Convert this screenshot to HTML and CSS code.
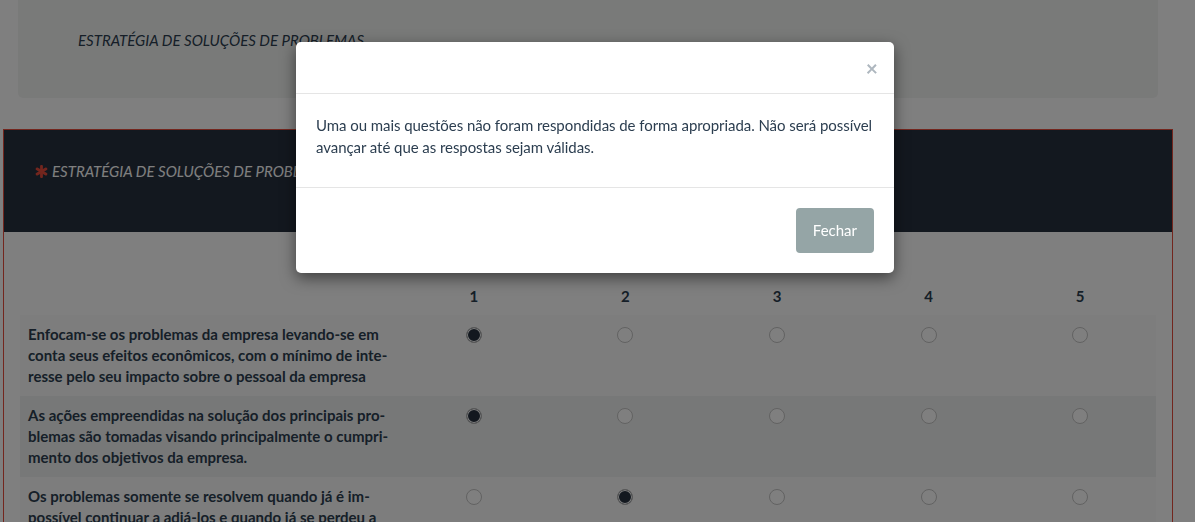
FILE: index.html
```html
<!DOCTYPE html>
<html lang="pt-BR">
<head>
    <meta charset="UTF-8">
    <meta name="viewport" content="width=device-width, initial-scale=1.0">
    <title>Questionário</title>
    <link rel="stylesheet" href="styles.css">
</head>
<body>
    <div class="page">
        <div class="well">
            <p class="well-title">ESTRATÉGIA DE SOLUÇÕES DE PROBLEMAS</p>
        </div>

        <div class="question-card">
            <div class="question-head">
                <svg class="required" width="13" height="13" viewBox="0 0 14 14">
                    <g fill="currentColor">
                        <rect x="5.5" y="0" width="3" height="14" rx="1.2"/>
                        <rect x="5.5" y="0" width="3" height="14" rx="1.2" transform="rotate(60 7 7)"/>
                        <rect x="5.5" y="0" width="3" height="14" rx="1.2" transform="rotate(-60 7 7)"/>
                    </g>
                </svg>
                <span class="question-title">ESTRATÉGIA DE SOLUÇÕES DE PROBLEMAS</span>
            </div>

            <div class="question-body">
                <table class="scale">
                    <colgroup>
                        <col class="col-text">
                        <col><col><col><col><col>
                    </colgroup>
                    <thead>
                        <tr>
                            <th></th>
                            <th>1</th><th>2</th><th>3</th><th>4</th><th>5</th>
                        </tr>
                    </thead>
                    <tbody>
                        <tr>
                            <td class="item">Enfocam-se os problemas da empresa levando-se em conta seus efeitos econômicos, com o mínimo de inte&shy;resse pelo seu impacto sobre o pessoal da empresa</td>
                            <td><input type="radio" name="q1" checked></td>
                            <td><input type="radio" name="q1"></td>
                            <td><input type="radio" name="q1"></td>
                            <td><input type="radio" name="q1"></td>
                            <td><input type="radio" name="q1"></td>
                        </tr>
                        <tr>
                            <td class="item">As ações empreendidas na solução dos principais pro&shy;blemas são tomadas visando principalmente o cumpri&shy;mento dos objetivos da empresa.</td>
                            <td><input type="radio" name="q2" checked></td>
                            <td><input type="radio" name="q2"></td>
                            <td><input type="radio" name="q2"></td>
                            <td><input type="radio" name="q2"></td>
                            <td><input type="radio" name="q2"></td>
                        </tr>
                        <tr>
                            <td class="item">Os problemas somente se resolvem quando já é im&shy;possível continuar a adiá-los e quando já se perdeu a oportunidade de resolvê-los com calma.</td>
                            <td><input type="radio" name="q3"></td>
                            <td><input type="radio" name="q3" checked></td>
                            <td><input type="radio" name="q3"></td>
                            <td><input type="radio" name="q3"></td>
                            <td><input type="radio" name="q3"></td>
                        </tr>
                    </tbody>
                </table>
            </div>
        </div>
    </div>

    <div class="backdrop"></div>

    <div class="modal">
        <div class="modal-dialog">
            <div class="modal-header">
                <button type="button" class="close">&times;</button>
            </div>
            <div class="modal-body">
                <p>Uma ou mais questões não foram respondidas de forma apropriada. Não será possível avançar até que as respostas sejam válidas.</p>
            </div>
            <div class="modal-footer">
                <button type="button" class="btn">Fechar</button>
            </div>
        </div>
    </div>
</body>
</html>
```

FILE: styles.css
```css
html{
    font-family: Lato, "Open Sans", sans-serif;
    font-size: 15px;
}

body{
    margin: 0;
    background-color: #ffffff;
    color: #2c3e50;
    line-height: 21px;
    overflow: hidden;
}

.page{
    width: 1170px;
    margin-left: 3px;
}

.well{
    margin: 0 15px;
    height: 98px;
    padding: 30px 60px 0;
    box-sizing: border-box;
    background-color: #f3f4f3;
    border-radius: 0 0 5px 5px;
}

.well-title{
    margin: 0;
    font-style: italic;
}

.question-card{
    margin-top: 31px;
    border: 1px solid #e74c3c;
}

.question-head{
    display: flex;
    align-items: center;
    gap: 4px;
    height: 102px;
    box-sizing: border-box;
    padding: 31px 30px 50px 31px;
    background-color: #26303e;
    color: #ffffff;
}

.required{
    color: #e74c3c;
    flex-shrink: 0;
}

.question-title{
    font-style: italic;
}

.question-body{
    padding: 46px 16px 0 16px;
}

.scale{
    width: 100%;
    table-layout: fixed;
    border-collapse: collapse;
}

.col-text{
    width: 378px;
}

.scale th{
    padding: 8px;
    text-align: center;
    font-weight: bold;
}

.scale td{
    padding: 9px 8px;
    text-align: center;
    vertical-align: top;
}

.scale td.item{
    padding-right: 6px;
    text-align: left;
    font-weight: bold;
    hyphens: manual;
}

.scale tbody tr:nth-child(odd){
    background-color: #fafafa;
}

.scale tbody tr:nth-child(even){
    background-color: #eff1f0;
}

.scale input[type="radio"]{
    appearance: none;
    width: 16px;
    height: 16px;
    margin: 3px 0 0;
    border: 1px solid #c4c4c4;
    border-radius: 50%;
    background-color: #ffffff;
    vertical-align: top;
}

.scale input[type="radio"]:checked{
    background-color: #26303e;
    box-shadow: inset 0 0 0 1px #ffffff;
    border-color: #b4b4b4;
}

.backdrop{
    position: fixed;
    inset: 0;
    background-color: rgba(0, 0, 0, 0.5);
}

.modal{
    position: fixed;
    inset: 0;
    display: flex;
    justify-content: center;
    align-items: flex-start;
    padding: 42px 5px 0 0;
}

.modal-dialog{
    width: 598px;
    background-color: #ffffff;
    border-radius: 5px;
    box-shadow: 0 5px 15px rgba(0, 0, 0, 0.5);
}

.modal-header{
    display: flex;
    justify-content: flex-end;
    padding: 15px 16px 15px 20px;
    border-bottom: 1px solid #e5e5e5;
}

.close{
    padding: 0;
    border: 0;
    background: none;
    font-family: inherit;
    font-size: 21px;
    line-height: 21px;
    font-weight: bold;
    color: #aeb7bf;
}

.modal-body{
    padding: 20px 16px 20px 20px;
    border-bottom: 1px solid #e5e5e5;
}

.modal-body p{
    margin: 0 0 9px;
    line-height: 22px;
    letter-spacing: -0.06px;
}

.modal-footer{
    display: flex;
    justify-content: flex-end;
    padding: 20px;
}

.btn{
    padding: 10px 15px;
    border: 2px solid #95a5a6;
    border-radius: 4px;
    background-color: #95a5a6;
    color: #ffffff;
    font-family: inherit;
    font-size: 15px;
    line-height: 21px;
}
```
